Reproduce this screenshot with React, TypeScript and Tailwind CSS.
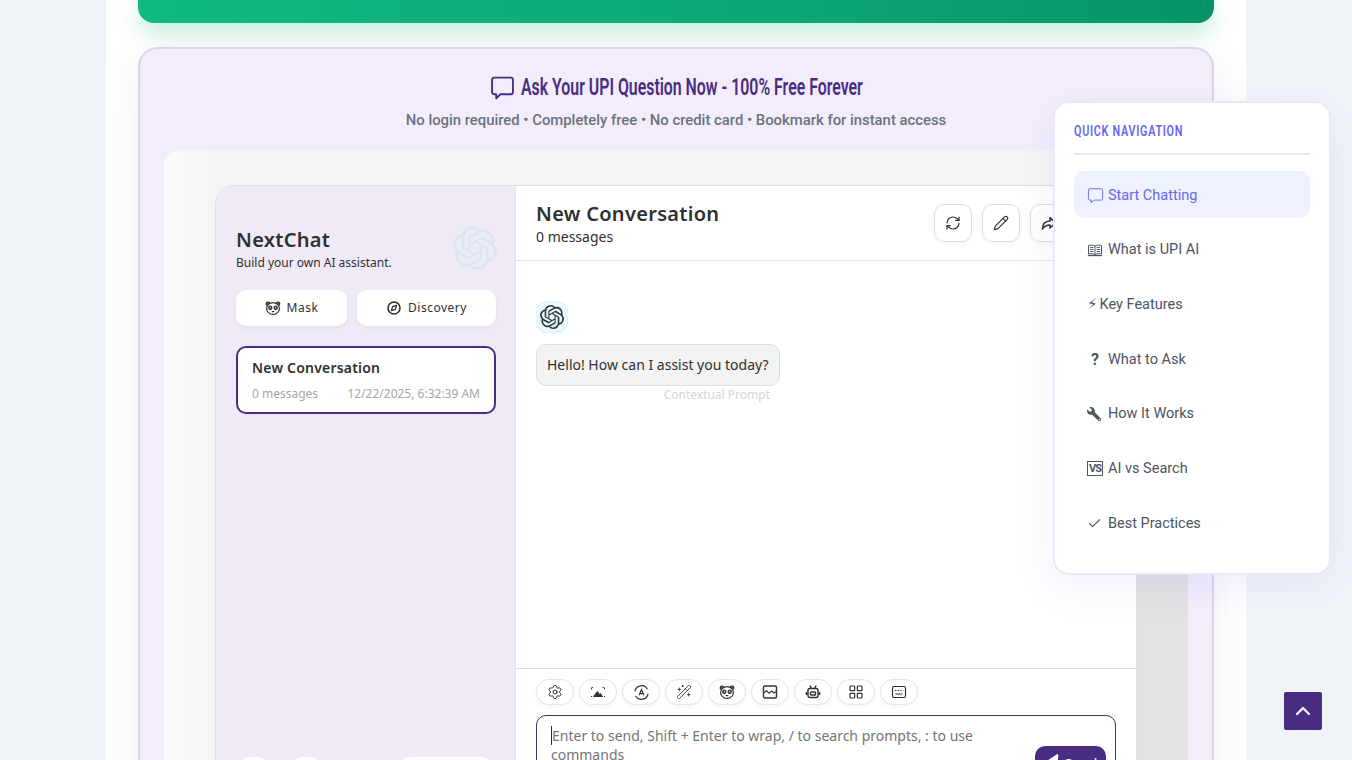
import type { ReactNode } from "react";
import { SiOpenai } from "react-icons/si";
import { FaWrench } from "react-icons/fa";
import { Check, ChevronUp, LayoutGrid, Pencil, RefreshCw, Send, Settings, WandSparkles } from "lucide-react";

const noto = "font-['Noto_Sans',sans-serif]";

function BubbleIcon({ size, width = 2, className }: { size: number; width?: number; className?: string }) {
  return (
    <svg width={size} height={size} viewBox="0 0 24 24" fill="none" stroke="currentColor" strokeWidth={width} className={className}>
      <path d="M4 2.5h16a2 2 0 0 1 2 2v12a2 2 0 0 1-2 2H10l-4 4v-4H4a2 2 0 0 1-2-2v-12a2 2 0 0 1 2-2Z" strokeLinejoin="round" />
    </svg>
  );
}

function BearIcon({ size = 16 }: { size?: number }) {
  return (
    <svg width={size} height={size} viewBox="0 0 16 16" fill="none" stroke="currentColor" strokeWidth="1.2">
      <circle cx="3" cy="3.8" r="1.8" fill="#555" />
      <circle cx="13" cy="3.8" r="1.8" fill="#555" />
      <ellipse cx="8" cy="8.5" rx="6.4" ry="5.9" fill="#fff" />
      <circle cx="5.3" cy="7.8" r="1.6" fill="#666" />
      <circle cx="10.7" cy="7.8" r="1.6" fill="#666" />
      <circle cx="5.5" cy="7.6" r="0.5" fill="#fff" stroke="none" />
      <circle cx="10.5" cy="7.6" r="0.5" fill="#fff" stroke="none" />
      <path d="M6.8 11.6h2.4" />
    </svg>
  );
}

function CompassIcon() {
  return (
    <svg width="16" height="16" viewBox="0 0 16 16" fill="none" stroke="currentColor" strokeWidth="1.6">
      <circle cx="8" cy="8" r="6" />
      <path d="M10.6 5.4 9.4 9.4 5.4 10.6 6.6 6.6Z" strokeWidth="1.3" strokeLinejoin="round" />
    </svg>
  );
}

function ScanIcon() {
  return (
    <svg width="16" height="16" viewBox="0 0 16 16" fill="currentColor" stroke="currentColor" strokeWidth="1">
      <path d="M3.500 12.500h9l-2.200-3-1 1-1.800-3Z" strokeLinejoin="round" />
      <path d="M1.500 5.500V3.500M1.500 3.500h2M12.500 3.500h2v2M1.500 12v1M14.500 12v1" fill="none" strokeDasharray="1.4 .8" />
    </svg>
  );
}

function TranslateIcon() {
  return (
    <svg width="17" height="17" viewBox="0 0 16 16" fill="none" stroke="currentColor" strokeWidth="1.1">
      <path d="M1.800 7A6.300 6.300 0 0 1 13.600 5M14.200 9A6.300 6.300 0 0 1 2.400 11" />
      <path d="M5.800 10.600 8 5.200l2.200 5.400M6.600 9h2.800" />
    </svg>
  );
}

function PictureIcon() {
  return (
    <svg width="16" height="16" viewBox="0 0 16 16" fill="none" stroke="currentColor" strokeWidth="1.4">
      <rect x="1.500" y="2" width="13" height="12" rx="1.500" />
      <path d="M1.500 9 4.500 6.800 7 9.200 9.500 7l2.500 2 2.500-1.500" strokeWidth="1.1" />
    </svg>
  );
}

function RobotIcon() {
  return (
    <svg width="16" height="16" viewBox="0 0 16 16" fill="none" stroke="currentColor" strokeWidth="1.4">
      <path d="M4.800 1.500 6.400 4.500M11.200 1.500 9.600 4.500" />
      <rect x="3" y="4.500" width="10" height="9" rx="2" fill="#fff" />
      <rect x="5.500" y="8" width="5" height="3" rx="0.8" />
      <path d="M1.500 8v3M14.500 8v3" strokeWidth="1.6" />
    </svg>
  );
}

function KeysIcon() {
  return (
    <svg width="16" height="16" viewBox="0 0 16 16" fill="none" stroke="currentColor" strokeWidth="1.2">
      <rect x="1.500" y="2.500" width="13" height="11" rx="1.500" />
      <path d="M4 6.500h1.400M6.600 6.500h1.400M9.200 6.500h1.400M12 6.500h.4M4.500 10h7" />
    </svg>
  );
}

function ForwardIcon() {
  return (
    <svg width="16" height="16" viewBox="0 0 16 16" fill="none" stroke="currentColor" strokeWidth="1.5" strokeLinejoin="round">
      <path d="M9 2.500 14.500 8 9 13v-3C5.500 10 3.500 11 1.500 14c0-4.500 2.500-7.800 7.500-8Z" />
    </svg>
  );
}

function BookGlyph() {
  return (
    <svg width="16" height="16" viewBox="0 0 16 16" fill="none" stroke="currentColor" strokeWidth="1" className="mr-[5px]">
      <path d="M1.500 3.500C3.500 3 6 3 8 4c2-1 4.500-1 6.500-.5v8.500c-2-.5-4.500-.5-6.500.5-2-1-4.500-1-6.500-.5Z" />
      <path d="M8 4v8.500M3 5.500h3.500M3 7.500h3.500M3 9.500h3.500M9.500 5.500H13M9.500 7.500H13M9.500 9.500H13" strokeWidth="0.9" />
      <path d="M.8 13.500h14.400" strokeWidth="1.3" />
    </svg>
  );
}

function IconButton({ children }: { children: ReactNode }) {
  return (
    <button type="button" className="flex h-[38px] w-[38px] shrink-0 items-center justify-center rounded-[10px] border border-[#dedede] bg-white text-[#303030] shadow-[0_2px_4px_rgba(0,0,0,0.03)]">
      {children}
    </button>
  );
}

function Chip({ children }: { children: ReactNode }) {
  return (
    <button type="button" className="flex h-[26px] w-[38px] items-center justify-center rounded-[13px] border border-[#e5e5e5] bg-white text-[#303030] shadow-[0_2px_4px_rgba(0,0,0,0.04)]">
      {children}
    </button>
  );
}

function NavItem({ icon, label, active }: { icon: ReactNode; label: string; active?: boolean }) {
  return (
    <div className={`flex h-[47px] items-center rounded-[10px] pt-[2px] pl-[13px] font-['Roboto',sans-serif] text-[14.5px] ${active ? "bg-[#eef2ff] text-[#6366f1]" : "text-[#4b5563]"}`}>
      {icon}
      <span>{label}</span>
    </div>
  );
}

function Sidebar() {
  return (
    <aside className={`flex w-[300px] shrink-0 flex-col border-r border-[#e4dfec] bg-[#f0eaf7] py-5 pr-[19px] pl-5 ${noto} text-[#303030]`}>
      <div className="relative pt-5">
        <div className="text-[20px] leading-[27px] font-semibold tracking-[0.3px]">NextChat</div>
        <div className="mt-px text-[12px] leading-[17px]">Build your own AI assistant.</div>
        <SiOpenai size={44} className="absolute top-5 right-[-1px] text-[#d8e8f3]" />
      </div>
      <div className="mt-[19px] flex gap-[10px]">
        <button type="button" className="flex h-9 w-[111px] items-center justify-center gap-[6px] rounded-[10px] bg-white text-[12px] tracking-[0.5px] shadow-[0_2px_4px_rgba(0,0,0,0.05)]">
          <BearIcon /> Mask
        </button>
        <button type="button" className="flex h-9 w-[139px] items-center justify-center gap-[6px] rounded-[10px] bg-white text-[12px] tracking-[0.5px] shadow-[0_2px_4px_rgba(0,0,0,0.05)]">
          <CompassIcon /> Discovery
        </button>
      </div>
      <div className="mt-5 h-[68px] rounded-[10px] border-2 border-[#4a2c82] bg-white px-[14px] pt-[10px]">
        <div className="text-[14px] leading-[19px] font-semibold tracking-[0.2px]">New Conversation</div>
        <div className="mt-[9px] flex justify-between text-[12px] leading-4 text-[#a6a6a6]">
          <span>0 messages</span>
          <span>12/22/2025, 6:32:39 AM</span>
        </div>
      </div>
      <div className="mt-[343px] flex items-start">
        <div className="ml-1 h-8 w-7 rounded-[10px] bg-white" />
        <div className="ml-6 h-8 w-7 rounded-[10px] bg-white" />
        <div className="ml-[80px] h-8 w-[92px] rounded-[10px] bg-white" />
      </div>
    </aside>
  );
}

function ChatPane() {
  return (
    <main className={`flex min-w-0 flex-1 flex-col bg-white ${noto} text-[#303030]`}>
      <header className="flex h-[75px] shrink-0 items-center justify-between border-b border-[#e3e3e3] px-5">
        <div>
          <div className="text-[20px] leading-[27px] font-semibold tracking-[0.3px]">New Conversation</div>
          <div className="text-[14px] leading-[19px]">0 messages</div>
        </div>
        <div className="flex gap-[10px]">
          <IconButton><RefreshCw size={16} strokeWidth={1.8} /></IconButton>
          <IconButton><Pencil size={16} strokeWidth={1.7} /></IconButton>
          <IconButton><ForwardIcon /></IconButton>
          <IconButton><ForwardIcon /></IconButton>
        </div>
      </header>

      <section className="h-[407px] shrink-0 px-5 pt-10">
        <div className="flex h-8 w-8 items-center justify-center rounded-[10px] border border-[#e3f1f8] bg-[#e7f8ff]">
          <SiOpenai size={24} className="text-[#30353c]" />
        </div>
        <div className="mt-[11px] w-fit rounded-[10px] border border-[#dedede] bg-[#f3f3f3] px-[10px] py-[10px] text-[14px] leading-[20px]">
          Hello! How can I assist you today?
        </div>
        <div className="mt-[1px] w-[234px] text-right text-[12px] leading-4 text-[#d4d4d4]">Contextual Prompt</div>
      </section>

      <footer className="flex-1 border-t border-[#dedede] px-5 pt-[10px]">
        <div className="flex gap-[5px]">
          <Chip><Settings size={16} strokeWidth={1.5} /></Chip>
          <Chip><ScanIcon /></Chip>
          <Chip><TranslateIcon /></Chip>
          <Chip><WandSparkles size={16} strokeWidth={1.3} /></Chip>
          <Chip><BearIcon /></Chip>
          <Chip><PictureIcon /></Chip>
          <Chip><RobotIcon /></Chip>
          <Chip><LayoutGrid size={16} strokeWidth={1.8} /></Chip>
          <Chip><KeysIcon /></Chip>
        </div>
        <div className="relative mt-[10px] h-[90px] rounded-[10px] border border-[#4a2c82] py-[10px] pr-[100px] pl-[14px] text-[14px] leading-[19px] text-[#757575]">
          <span className="border-l border-[#303030]">Enter to send, Shift + Enter to wrap, / to search prompts, : to use commands</span>
          <button type="button" className="absolute top-[30px] right-[9px] flex h-[34px] w-[71px] items-center justify-center gap-1 rounded-[10px] bg-[#4a2c82] text-[14px] text-white">
            <Send size={17} fill="currentColor" className="-rotate-[15deg]" /> Send
          </button>
        </div>
      </footer>
    </main>
  );
}

export default function App() {
  return (
    <div className="relative h-[760px] w-[1352px] overflow-hidden bg-[#f0f4f8]">
      <div className="ml-[106px] h-full w-[1140px] bg-white px-8">
        <div className="h-[23px] rounded-b-2xl bg-[linear-gradient(90deg,#10b981,#0ca678_60%,#059669_96%,#05916a)] shadow-[0_8px_24px_rgba(16,185,129,0.3)]" />

        <section className="mt-6 h-[900px] rounded-[20px] border-2 border-[#dcd3ea] bg-[#f3edfb] px-6 shadow-[0_10px_40px_rgba(74,44,130,0.08)]">
          <h2 className="mt-5 flex h-9 items-center justify-center gap-[6px] font-['Roboto',sans-serif] text-[24px] font-semibold text-[#4a2c82]">
            <BubbleIcon size={25} width={1.8} />
            <span className="w-[342px] origin-left scale-x-[0.661] whitespace-nowrap">Ask Your UPI Question Now - 100% Free Forever</span>
          </h2>
          <p className="mt-1 text-center font-['Roboto',sans-serif] text-[14.85px] leading-[22px] font-medium text-[#6b7280]">
            No login required • Completely free • No credit card • Bookmark for instant access
          </p>

          <div className="mt-[19px] h-[760px] w-[1024px] rounded-2xl bg-[linear-gradient(90deg,#fafafa,#f5f5f5_5%,#f5f5f5_90%,#e2e2e2_94%)] pt-[35px] pl-[51px]">
            <div className="flex h-[640px] w-[922px] overflow-hidden rounded-[20px] border border-[#dedede]">
              <Sidebar />
              <ChatPane />
            </div>
          </div>
        </section>
      </div>

      {/* fixed quick nav */}
      <nav className="absolute top-[101px] left-[1053px] h-[474px] w-[278px] rounded-2xl border-2 border-[#e6eaf9] bg-white px-[19px] pt-[18px] shadow-[0_10px_40px_rgba(99,102,241,0.1)]">
        <div className="font-['Roboto',sans-serif] text-[15px] leading-5 font-semibold tracking-[1px] text-[#6366f1]">
          <span className="inline-block origin-left scale-x-[0.72] whitespace-nowrap">QUICK NAVIGATION</span>
        </div>
        <div className="mt-[12px] h-[2px] bg-[#e5e7f5]" />
        <div className="mt-4 flex flex-col gap-[7.7px]">
          <NavItem active label="Start Chatting" icon={<BubbleIcon size={17} width={1.3} className="mr-[4px]" />} />
          <NavItem label="What is UPI AI" icon={<BookGlyph />} />
          <NavItem label="Key Features" icon={<span className="mr-[2px] font-['DejaVu_Sans',sans-serif] text-[15px] leading-none">⚡</span>} />
          <NavItem label="What to Ask" icon={<span className="mr-[8px] ml-[4px] w-[9px] text-[16px] font-bold">?</span>} />
          <NavItem label="How It Works" icon={<FaWrench size={14} className="mr-[7px] -rotate-90" />} />
          <NavItem label="AI vs Search" icon={<span className="mr-[5px] flex h-[15px] w-[16px] items-center justify-center border border-[#4b5563] text-[11px] font-bold tracking-[-1px]">VS</span>} />
          <NavItem label="Best Practices" icon={<Check size={15} strokeWidth={1.8} className="mr-[6px]" />} />
        </div>
      </nav>

      <button type="button" className="absolute top-[692px] left-[1284px] flex h-[38px] w-[38px] items-center justify-center rounded-[2px] bg-[#4a2c82] text-white">
        <ChevronUp size={24} strokeWidth={2.2} />
      </button>
    </div>
  );
}
